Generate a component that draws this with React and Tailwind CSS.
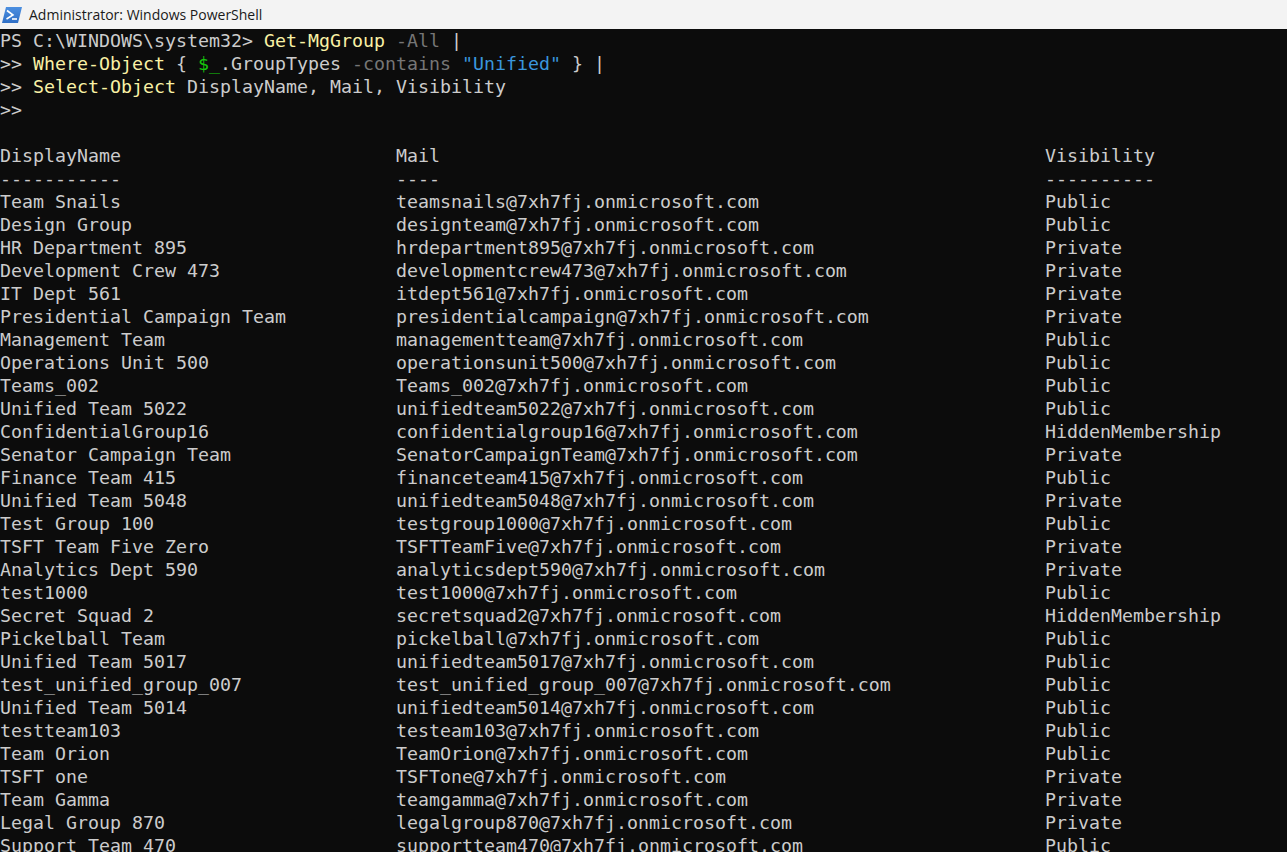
const rows = [
  ['Team Snails', 'teamsnails@7xh7fj.onmicrosoft.com', 'Public'],
  ['Design Group', 'designteam@7xh7fj.onmicrosoft.com', 'Public'],
  ['HR Department 895', 'hrdepartment895@7xh7fj.onmicrosoft.com', 'Private'],
  ['Development Crew 473', 'developmentcrew473@7xh7fj.onmicrosoft.com', 'Private'],
  ['IT Dept 561', 'itdept561@7xh7fj.onmicrosoft.com', 'Private'],
  ['Presidential Campaign Team', 'presidentialcampaign@7xh7fj.onmicrosoft.com', 'Private'],
  ['Management Team', 'managementteam@7xh7fj.onmicrosoft.com', 'Public'],
  ['Operations Unit 500', 'operationsunit500@7xh7fj.onmicrosoft.com', 'Public'],
  ['Teams_002', 'Teams_002@7xh7fj.onmicrosoft.com', 'Public'],
  ['Unified Team 5022', 'unifiedteam5022@7xh7fj.onmicrosoft.com', 'Public'],
  ['ConfidentialGroup16', 'confidentialgroup16@7xh7fj.onmicrosoft.com', 'HiddenMembership'],
  ['Senator Campaign Team', 'SenatorCampaignTeam@7xh7fj.onmicrosoft.com', 'Private'],
  ['Finance Team 415', 'financeteam415@7xh7fj.onmicrosoft.com', 'Public'],
  ['Unified Team 5048', 'unifiedteam5048@7xh7fj.onmicrosoft.com', 'Private'],
  ['Test Group 100', 'testgroup1000@7xh7fj.onmicrosoft.com', 'Public'],
  ['TSFT Team Five Zero', 'TSFTTeamFive@7xh7fj.onmicrosoft.com', 'Private'],
  ['Analytics Dept 590', 'analyticsdept590@7xh7fj.onmicrosoft.com', 'Private'],
  ['test1000', 'test1000@7xh7fj.onmicrosoft.com', 'Public'],
  ['Secret Squad 2', 'secretsquad2@7xh7fj.onmicrosoft.com', 'HiddenMembership'],
  ['Pickelball Team', 'pickelball@7xh7fj.onmicrosoft.com', 'Public'],
  ['Unified Team 5017', 'unifiedteam5017@7xh7fj.onmicrosoft.com', 'Public'],
  ['test_unified_group_007', 'test_unified_group_007@7xh7fj.onmicrosoft.com', 'Public'],
  ['Unified Team 5014', 'unifiedteam5014@7xh7fj.onmicrosoft.com', 'Public'],
  ['testteam103', 'testeam103@7xh7fj.onmicrosoft.com', 'Public'],
  ['Team Orion', 'TeamOrion@7xh7fj.onmicrosoft.com', 'Public'],
  ['TSFT one', 'TSFTone@7xh7fj.onmicrosoft.com', 'Private'],
  ['Team Gamma', 'teamgamma@7xh7fj.onmicrosoft.com', 'Private'],
  ['Legal Group 870', 'legalgroup870@7xh7fj.onmicrosoft.com', 'Private'],
  ['Support Team 470', 'supportteam470@7xh7fj.onmicrosoft.com', 'Public'],
];

function Row({ name, mail, vis }) {
  return (
    <div className="grid grid-cols-[396px_649px_1fr] h-[23px] whitespace-pre">
      <span>{name}</span>
      <span>{mail}</span>
      <span>{vis}</span>
    </div>
  );
}

export default function App() {
  return (
    <div className="h-[852px] overflow-hidden bg-[#0c0c0c] flex flex-col">
      <div className="h-[29px] shrink-0 bg-[#f3f3f3] flex items-center">
        <svg className="ml-[2px] w-[20px] h-[18px]" viewBox="0 0 20 18">
          <defs>
            <linearGradient id="ps" x1="0" y1="0" x2="0" y2="1">
              <stop offset="0" stopColor="#4c8fe0" />
              <stop offset="1" stopColor="#2f6fc6" />
            </linearGradient>
          </defs>
          <path d="M4 1h16l-4 16H0z" fill="url(#ps)" />
          <path d="M5 4.5l6 4.5-6.5 4" fill="none" stroke="#fff" strokeWidth="1.6" />
          <path d="M10 13h5" stroke="#fff" strokeWidth="1.6" />
        </svg>
        <span className="ml-[7px] text-[14px] text-[#1a1a1a] font-['Open_Sans',sans-serif]">
          Administrator: Windows PowerShell
        </span>
      </div>
      <div className="font-['DejaVu_Sans_Mono',monospace] text-[18.27px] leading-[23px] text-[#cccccc]">
        <div className="whitespace-pre h-[23px]">
          PS C:\WINDOWS\system32&gt; <span className="text-[#f9f1a5]">Get-MgGroup</span>{' '}
          <span className="text-[#767676]">-All</span> |
        </div>
        <div className="whitespace-pre h-[23px]">
          &gt;&gt; <span className="text-[#f9f1a5]">Where-Object</span> {'{ '}
          <span className="text-[#16c60c]">$_</span>.GroupTypes{' '}
          <span className="text-[#767676]">-contains</span>{' '}
          <span className="text-[#3a96dd]">"Unified"</span> {'} |'}
        </div>
        <div className="whitespace-pre h-[23px]">
          &gt;&gt; <span className="text-[#f9f1a5]">Select-Object</span> DisplayName, Mail, Visibility
        </div>
        <div className="whitespace-pre h-[23px]">&gt;&gt;</div>
        <div className="h-[23px]" />
        <Row name="DisplayName" mail="Mail" vis="Visibility" />
        <Row name="-----------" mail="----" vis="----------" />
        {rows.map((r) => (
          <Row key={r[1]} name={r[0]} mail={r[1]} vis={r[2]} />
        ))}
      </div>
    </div>
  );
}
